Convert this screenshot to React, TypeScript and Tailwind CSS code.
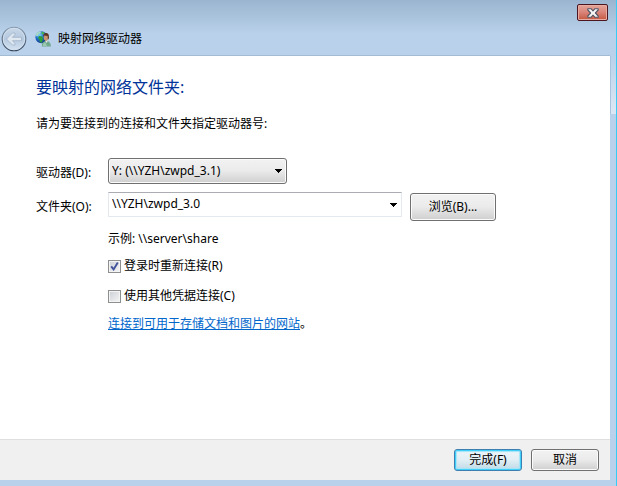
import { useState } from 'react';

const ArrowDown = ({ className = '' }: { className?: string }) => (
  <svg viewBox="0 0 8 4" className={`h-1 w-2 ${className}`} aria-hidden="true" shapeRendering="crispEdges">
    <path d="M0 0H8L4 4Z" fill="#000" />
  </svg>
);

const BackIcon = () => (
  <svg viewBox="0 0 26 26" className="size-[26px]" aria-hidden="true">
    <defs>
      <linearGradient id="back-fill" x1="0" y1="0" x2="0" y2="1">
        <stop offset="0" stopColor="#c9d8e8" />
        <stop offset="0.5" stopColor="#b4c8df" />
        <stop offset="1" stopColor="#d5e4f2" />
      </linearGradient>
      <linearGradient id="back-ring" x1="0" y1="0" x2="0" y2="1">
        <stop offset="0" stopColor="#8799ad" />
        <stop offset="1" stopColor="#344458" />
      </linearGradient>
    </defs>
    <circle cx="13" cy="13" r="11.8" fill="url(#back-fill)" stroke="url(#back-ring)" strokeWidth="1.1" />
    <circle cx="13" cy="13" r="10.7" fill="none" stroke="#d3e0ee" strokeWidth="0.9" />
    <path
      d="M5.5 13L11.5 7H14V8.6L11.4 11.3H20.5V14.7H11.4L14 17.4V19H11.5Z"
      fill="#dfe7f0"
      stroke="#9fb2c8"
      strokeWidth="0.8"
      strokeLinejoin="round"
    />
  </svg>
);

const NetworkIcon = () => (
  <svg viewBox="0 0 16 16" className="size-4" aria-hidden="true">
    <defs>
      <radialGradient id="globe" cx="0.35" cy="0.3" r="0.75">
        <stop offset="0" stopColor="#7fd0fa" />
        <stop offset="0.45" stopColor="#2276cf" />
        <stop offset="1" stopColor="#0b2f80" />
      </radialGradient>
    </defs>
    <circle cx="6.4" cy="6.2" r="6" fill="url(#globe)" />
    <path d="M1 3.4C2.3 1.2 4.2 0.4 6 0.5L5.5 2.2L3.6 3L3 5L1.2 5.2Z" fill="#a8dcc0" />
    <path d="M4.2 5L7.4 5.4L8 8.4L6.4 12L4.8 10.8L4.4 8.4L3 7Z" fill="#2f9e36" />
    <path d="M6.6 0.8L9.5 1.4L8.3 3.8L6.8 3Z" fill="#4cb84e" />
    <path d="M6.8 15.4C6.7 12.4 8 10.6 10.2 10H12.6C14.8 10.8 15.9 12.6 15.9 15.4Z" fill="#72a88e" />
    <path d="M7.8 15C7.9 12.9 8.8 11.8 10.2 11.2L12 15Z" fill="#9bcab3" />
    <path d="M10 9.6H12.8L11.8 12Z" fill="#e6ece4" />
    <ellipse cx="11" cy="6.6" rx="2.2" ry="3.3" fill="#c99570" />
    <path d="M8.4 6C8 2.7 9.2 1.8 11.2 1.9C13.4 2 14.4 3.7 13.8 7.8L12.9 8.8L12.6 5L9.4 4.6Z" fill="#5b3724" />
  </svg>
);

const CloseIcon = () => (
  <svg viewBox="0 0 12 10" className="h-[10px] w-3" aria-hidden="true">
    <path
      d="M0.8 0.7H4L6 2.8L8 0.7H11.2V2L8.4 5L11.2 8V9.3H8L6 7.2L4 9.3H0.8V8L3.6 5L0.8 2Z"
      fill="#f6f6f6"
      stroke="#535666"
      strokeWidth="1.1"
      strokeLinejoin="round"
    />
  </svg>
);

const buttonStyle =
  'rounded-[3px] border border-[#707070] bg-linear-to-b from-[#f2f2f2] from-0% via-[#ebebeb] via-48% to-[#cfcfcf] shadow-[inset_0_0_0_1px_#fbfbfb]';

const checkboxStyle =
  'peer col-start-1 row-start-1 size-[13px] appearance-none border border-[#8e8f8f] bg-linear-to-br from-[#cbcfd5] to-[#f6f6f6] shadow-[inset_0_0_0_1px_#f4f4f4]';

type CheckRowProps = {
  id: string;
  label: string;
  checked: boolean;
  onChange: (value: boolean) => void;
};

const CheckRow = ({ id, label, checked, onChange }: CheckRowProps) => (
  <div className="flex h-4 items-center gap-[3px]">
    <span className="grid place-items-center">
      <input
        id={id}
        type="checkbox"
        checked={checked}
        onChange={(e) => onChange(e.target.checked)}
        className={checkboxStyle}
      />
      <svg
        viewBox="0 0 9 9"
        className="pointer-events-none invisible col-start-1 row-start-1 size-[9px] peer-checked:visible"
        aria-hidden="true"
      >
        <path d="M1.2 4.4L3.6 7.4L7.8 0.6" fill="none" stroke="#40529b" strokeWidth="1.9" />
      </svg>
    </span>
    <label htmlFor={id}>{label}</label>
  </div>
);

const App = () => {
  const [drive, setDrive] = useState('Y');
  const [folder, setFolder] = useState('\\\\YZH\\zwpd_3.0');
  const [reconnect, setReconnect] = useState(true);
  const [otherCredentials, setOtherCredentials] = useState(false);

  return (
    <div className="flex min-h-screen flex-col border-r border-[#35cdf5] bg-[#b9d1ea] pb-[6px] font-['Noto_Sans','Noto_Sans_CJK_SC',sans-serif] text-xs leading-4 text-black">
      <header className="flex h-14 bg-linear-to-b from-[#9bb5d0] to-[#b9d1ea] to-60%">
        <div className="flex flex-1 items-end justify-between border-b border-[#a1bcd3] pl-px">
          <div className="flex items-center pb-[3px]">
            <button type="button" aria-label="返回" className="rounded-full">
              <BackIcon />
            </button>
            <div className="flex items-center gap-[7px] pl-2">
              <NetworkIcon />
              <h1>映射网络驱动器</h1>
            </div>
          </div>
          <button
            type="button"
            aria-label="关闭"
            className="mt-1 mr-[2px] flex h-[17px] w-[31px] items-center justify-center self-start rounded-[2px] border border-[#4b1620] bg-linear-to-b from-[#e5a59b] from-0% via-[#d98277] via-50% to-[#c4573f] shadow-[inset_0_0_0_1px_#e9aca2]"
          >
            <CloseIcon />
          </button>
        </div>
        <div className="w-[6px]" />
      </header>

      <div className="flex flex-1">
        <div className="flex min-w-0 flex-1 flex-col bg-white">
          <main className="flex-1 pt-[19px] pl-9">
            <h2 className="text-base leading-6 text-[#003399]">要映射的网络文件夹:</h2>
            <p className="mt-[17px]">请为要连接到的连接和文件夹指定驱动器号:</p>

            <form
              id="map-drive"
              className="mt-[26px] grid grid-cols-[72px_1fr]"
              onSubmit={(e) => e.preventDefault()}
            >
              <label htmlFor="drive" className="pt-[7px]">
                驱动器(D):
              </label>
              <div className="grid w-[179px] items-center">
                <select
                  id="drive"
                  value={drive}
                  onChange={(e) => setDrive(e.target.value)}
                  className={`col-start-1 row-start-1 h-[26px] w-full appearance-none px-[3px] ${buttonStyle}`}
                >
                  <option value="Y">Y: (\\YZH\zwpd_3.1)</option>
                </select>
                <ArrowDown className="pointer-events-none col-start-1 row-start-1 mr-[5px] justify-self-end" />
              </div>

              <label htmlFor="folder" className="pt-[15px]">
                文件夹(O):
              </label>
              <div className="flex items-start gap-2 pt-2">
                <div className="flex h-[25px] w-[294px] border border-[#e3e9ef] border-t-[#abadb3]">
                  <input
                    id="folder"
                    type="text"
                    value={folder}
                    onChange={(e) => setFolder(e.target.value)}
                    className="min-w-0 flex-1 px-[3px] pb-[2px] outline-none"
                  />
                  <button type="button" aria-label="显示文件夹列表" className="px-1">
                    <ArrowDown />
                  </button>
                </div>
                <button type="button" className={`mt-px h-7 w-[86px] ${buttonStyle}`}>
                  浏览(B)...
                </button>
              </div>

              <div className="col-start-2 flex flex-col items-start pt-[10px]">
                <p>示例: \\server\share</p>
                <div className="mt-[11px] flex flex-col gap-[14px]">
                  <CheckRow id="reconnect" label="登录时重新连接(R)" checked={reconnect} onChange={setReconnect} />
                  <CheckRow
                    id="credentials"
                    label="使用其他凭据连接(C)"
                    checked={otherCredentials}
                    onChange={setOtherCredentials}
                  />
                </div>
                <p className="mt-3">
                  <a href="#website" className="text-[#0066cc] underline">
                    连接到可用于存储文档和图片的网站
                  </a>
                  。
                </p>
              </div>
            </form>
          </main>

          <footer className="flex h-[41px] items-start justify-end gap-[9px] border-t border-[#dfdfdf] bg-[#f0f0f0] pt-[9px] pr-[11px]">
            <button
              type="submit"
              form="map-drive"
              className="h-[22px] w-[68px] rounded-[3px] border border-[#3c7fb1] bg-linear-to-b from-[#eef5f8] from-0% via-[#e2eff5] via-48% to-[#bfd9e5] shadow-[inset_0_0_0_1px_#3fcff8,inset_0_0_1px_2px_#a5e5f8]"
            >
              完成(F)
            </button>
            <button type="button" className={`h-[22px] w-[68px] ${buttonStyle}`}>
              取消
            </button>
          </footer>
        </div>
        <div className="w-[6px]">
          <div className="h-[58px] border-l border-[#a9c3dc] bg-linear-to-b from-[#b9d1ea] to-[#dde8f5]" />
        </div>
      </div>
    </div>
  );
};

export default App;
